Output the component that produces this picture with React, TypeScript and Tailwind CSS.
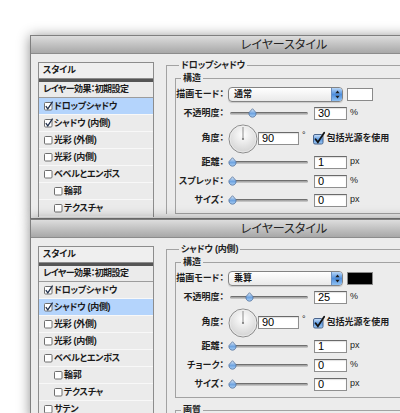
import React from "react";

type Item = { label: string; checked?: boolean; indent?: boolean };

const items: Item[] = [
  { label: "ドロップシャドウ", checked: true },
  { label: "シャドウ (内側)", checked: true },
  { label: "光彩 (外側)" },
  { label: "光彩 (内側)" },
  { label: "ベベルとエンボス" },
  { label: "輪郭", indent: true },
  { label: "テクスチャ", indent: true },
  { label: "サテン" },
];

function ListCheck({ checked }: { checked?: boolean }) {
  return (
    <svg width="10" height="10" viewBox="0 0 10 10" className="shrink-0 overflow-visible">
      <rect x="0.5" y="1.5" width="7.5" height="7.5" rx="1" fill="#fff" stroke="#6e6e6e" />
      {checked && (
        <path d="M1.8 5.2 L3.8 7.8 L8.6 0.6" fill="none" stroke="#22314d" strokeWidth="1.3" />
      )}
    </svg>
  );
}

function AquaCheck() {
  return (
    <svg width="13" height="13" viewBox="0 0 13 13" className="shrink-0 overflow-visible">
      <defs>
        <linearGradient id="aquacb" x1="0" y1="0" x2="0" y2="1">
          <stop offset="0" stopColor="#cfe3f9" />
          <stop offset="0.5" stopColor="#5f9be2" />
          <stop offset="1" stopColor="#9cc8f3" />
        </linearGradient>
      </defs>
      <rect x="0.5" y="2.5" width="9.5" height="9.5" rx="1.5" fill="url(#aquacb)" stroke="#4a648c" />
      <path d="M2.6 7.2 L4.9 10.2 L11.2 0.8" fill="none" stroke="#121212" strokeWidth="1.8" strokeLinecap="round" />
    </svg>
  );
}

function Thumb({ left }: { left: number }) {
  return (
    <svg
      width="9"
      height="10"
      viewBox="0 0 9 10"
      className="absolute top-[2px]"
      style={{ left }}
    >
      <defs>
        <linearGradient id="thumbg" x1="0" y1="0" x2="0" y2="1">
          <stop offset="0" stopColor="#e2eefb" />
          <stop offset="0.55" stopColor="#6ea3e0" />
          <stop offset="1" stopColor="#a9cff5" />
        </linearGradient>
      </defs>
      <path d="M4.5 0.7 L7.9 4.4 A3.6 3.6 0 1 1 1.1 4.4 Z" fill="url(#thumbg)" stroke="#55729c" strokeWidth="0.8" />
    </svg>
  );
}

function Slider({ pos }: { pos: number }) {
  return (
    <div className="relative flex h-[14px] w-[82px] shrink-0 items-center px-[2px]">
      <div className="h-[3px] w-full rounded-full border-t border-[#6f6f6f] bg-linear-to-b from-[#9a9a9a] to-[#d2d2d2]" />
      <Thumb left={pos} />
    </div>
  );
}

function Field({ v, w }: { v: string; w: string }) {
  return (
    <div
      className={`flex h-[13px] ${w} shrink-0 items-center border border-[#8f8f8f] border-t-[#6a6a6a] bg-white pl-[3px] text-[11px] leading-none text-black shadow-[inset_0_1px_1px_rgba(0,0,0,0.12)]`}
    >
      {v}
    </div>
  );
}

function Label({ children }: { children: React.ReactNode }) {
  return (
    <div className="w-[48px] shrink-0 whitespace-nowrap text-right text-[9px] font-bold leading-none text-[#1e1e1e]">
      {children}
    </div>
  );
}

function SliderRow({
  label,
  pos,
  v,
  unit,
  mt,
}: {
  label: string;
  pos: number;
  v: string;
  unit: string;
  mt: string;
}) {
  return (
    <div className={`flex h-[14px] items-center ${mt}`}>
      <Label>{label}</Label>
      <div className="ml-[4px] flex items-center">
        <Slider pos={pos} />
        <div className="ml-[4px]">
          <Field v={v} w="w-[33px]" />
        </div>
        <span className="ml-[3px] text-[9px] text-[#222]">{unit}</span>
      </div>
    </div>
  );
}

function Dial() {
  return (
    <svg width="30" height="30" viewBox="0 0 30 30" className="shrink-0">
      <defs>
        <radialGradient id="dialg" cx="50%" cy="35%" r="65%">
          <stop offset="0" stopColor="#ffffff" />
          <stop offset="1" stopColor="#d2d2d2" />
        </radialGradient>
      </defs>
      <circle cx="15" cy="15" r="14" fill="url(#dialg)" stroke="#8a8a8a" />
      <circle cx="15" cy="15" r="13" fill="none" stroke="#f4f4f4" strokeWidth="0.6" />
      <line x1="15" y1="15" x2="15" y2="3" stroke="#8d8d8d" strokeWidth="1" />
      <circle cx="15" cy="15" r="1.1" fill="#7a7a7a" />
    </svg>
  );
}

function Select({ value }: { value: string }) {
  return (
    <div className="flex h-[15px] w-[115px] shrink-0 items-center overflow-hidden rounded-[4px] border border-[#838383] bg-linear-to-b from-white to-[#e9e9e9] shadow-[0_1px_1px_rgba(0,0,0,0.15)]">
      <span className="flex-1 pl-[5px] text-[9px] font-bold leading-none text-[#1a1a1a]">{value}</span>
      <span className="flex h-full w-[11px] items-center justify-center border-l border-[#6b8fc0] bg-linear-to-b from-[#b7d6f7] via-[#4f8fdd] to-[#8fc0f1]">
        <svg width="5" height="9" viewBox="0 0 5 9">
          <path d="M2.5 0.5 L4.6 3.3 L0.4 3.3 Z" fill="#1b1b1b" />
          <path d="M2.5 8.5 L4.6 5.7 L0.4 5.7 Z" fill="#1b1b1b" />
        </svg>
      </span>
    </div>
  );
}

function StyleList({ selected, rows }: { selected: number; rows: number }) {
  return (
    <div className="mt-[8px] w-[116px] shrink-0">
      <div className="flex h-[17px] items-center border border-[#8c8c8c] bg-[#efefef] pl-[4px] text-[9px] font-bold leading-none tracking-[-0.2px] text-[#1a1a1a]">
        スタイル
      </div>
      <div className="h-[3px] border-x border-[#8c8c8c] bg-[#555]" />
      <div className="border-x border-[#8c8c8c] bg-[#ebebeb]">
        <div className="flex h-[16px] items-center border-b border-[#9c9c9c] pl-[4px] text-[9px] font-bold leading-none tracking-[-0.6px] text-[#1a1a1a]">
          レイヤー効果：初期設定
        </div>
        {items.slice(0, rows).map((it, i) => (
          <div
            key={it.label}
            className={`flex h-[17px] items-center border-b border-[#f8f8f8] text-[9px] font-bold leading-none tracking-[-0.3px] text-[#1a1a1a] ${
              it.indent ? "pl-[15px]" : "pl-[5px]"
            } ${i === selected ? "bg-[#b4d4fc]" : ""}`}
          >
            <ListCheck checked={it.checked} />
            <span>{it.label}</span>
          </div>
        ))}
      </div>
    </div>
  );
}

function Panel({
  title,
  blend,
  swatch,
  opacity,
  opPos,
  fifth,
  quality,
}: {
  title: string;
  blend: string;
  swatch: string;
  opacity: string;
  opPos: number;
  fifth: string;
  quality: boolean;
}) {
  return (
    <fieldset className="ml-[12px] mt-[5px] min-w-0 flex-1 border-l border-t border-[#a2a2a2] pl-[8px]">
      <legend className="ml-[4px] px-[2px] text-[9px] font-bold leading-[12px] tracking-[-0.2px] text-[#1e1e1e]">{title}</legend>
      <fieldset className="mt-[1px] border-y border-l border-[#a2a2a2] pb-[6px] pt-[3px]">
        <legend className="ml-[5px] px-[2px] text-[9px] font-bold leading-[12px] text-[#1e1e1e]">構造</legend>
        <div className="flex h-[15px] items-center">
          <Label>描画モード：</Label>
          <div className="ml-[4px] flex items-center">
            <Select value={blend} />
            <div className={`ml-[4px] h-[13px] w-[26px] border border-[#8a8a8a] ${swatch}`} />
          </div>
        </div>
        <SliderRow label="不透明度：" pos={opPos} v={opacity} unit="%" mt="mt-[4px]" />
        <div className="mt-[4px] flex h-[29px] items-center">
          <Label>角度：</Label>
          <div className="ml-[4px] flex items-center">
            <Dial />
            <Field v="90" w="w-[41px]" />
            <span className="mb-[7px] ml-[3px] text-[9px] leading-none text-[#222]">°</span>
            <div className="ml-[7px] flex items-center">
              <AquaCheck />
              <span className="ml-[1px] text-[9px] font-bold leading-none text-[#1e1e1e]">包括光源を使用</span>
            </div>
          </div>
        </div>
        <SliderRow label="距離：" pos={0} v="1" unit="px" mt="mt-[2px]" />
        <SliderRow label={fifth} pos={0} v="0" unit="%" mt="mt-[5px]" />
        <SliderRow label="サイズ：" pos={0} v="0" unit="px" mt="mt-[5px]" />
      </fieldset>
      {quality && (
        <fieldset className="mt-[6px] h-[30px] border-l border-t border-[#a2a2a2]">
          <legend className="ml-[5px] px-[2px] text-[9px] font-bold leading-[12px] text-[#1e1e1e]">画質</legend>
        </fieldset>
      )}
    </fieldset>
  );
}

function Window({
  h,
  selected,
  rows,
  ...p
}: {
  h: string;
  selected: number;
  rows: number;
  title: string;
  blend: string;
  swatch: string;
  opacity: string;
  opPos: number;
  fifth: string;
  quality: boolean;
}) {
  return (
    <div
      className={`relative ${h} w-[508px] overflow-hidden border border-[#7f7f7f] bg-[#ececec] shadow-[0_1px_12px_rgba(0,0,0,0.45)]`}
    >
      <div className="flex h-[18px] items-center justify-center border-b border-[#8c8c8c] bg-linear-to-b from-[#dddddd] to-[#a8a8a8] text-[12px] leading-none text-[#242424]">
        レイヤースタイル
      </div>
      <div className="flex items-start pl-[7px]">
        <StyleList selected={selected} rows={rows} />
        <Panel {...p} />
      </div>
    </div>
  );
}

export default function App() {
  return (
    <div className="h-[413px] w-[400px] overflow-hidden bg-white pl-[30px] pt-[35px] font-['Liberation_Sans','Noto_Sans_CJK_JP',sans-serif] [font-feature-settings:'palt']">
      <Window
        h="h-[184px]"
        selected={0}
        rows={7}
        title="ドロップシャドウ"
        blend="通常"
        swatch="bg-white"
        opacity="30"
        opPos={20}
        fifth="スプレッド："
        quality={false}
      />
      <Window
        h="h-[200px]"
        selected={1}
        rows={8}
        title="シャドウ (内側)"
        blend="乗算"
        swatch="bg-black"
        opacity="25"
        opPos={17}
        fifth="チョーク："
        quality
      />
    </div>
  );
}
